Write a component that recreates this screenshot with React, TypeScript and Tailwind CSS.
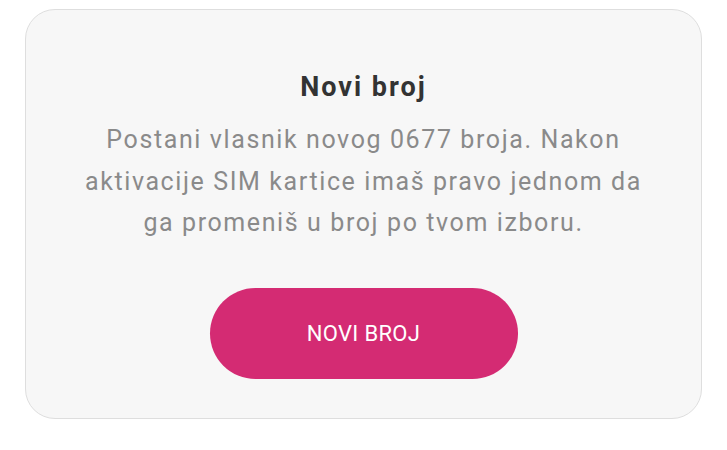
export default function App() {
  return (
    <div className="min-h-[450px] w-[727px] bg-white pt-[9px] pl-[25px]" style={{ fontFamily: 'Roboto, "Liberation Sans", sans-serif' }}>
      <div className="flex h-[410px] w-[677px] flex-col items-center rounded-[30px] border-[1.5px] border-[#dedede] bg-[#f7f7f7] pt-[60px]">
        <h2 className="text-[27px] leading-[34px] font-bold tracking-[2px] text-[#333333]">Novi broj</h2>
        <p className="mt-[15px] w-[580px] text-center text-[25px] leading-[41.5px] tracking-[1.6px] text-[#8a8a8a]">
          Postani vlasnik novog 0677 broja. Nakon aktivacije SIM kartice imaš pravo jednom da ga promeniš u broj po tvom izboru.
        </p>
        <button className="mt-[44px] flex h-[91px] w-[308px] items-center justify-center rounded-full bg-[#d42b73] text-[22px] tracking-[0.3px] text-white">
          NOVI BROJ
        </button>
      </div>
    </div>
  );
}
